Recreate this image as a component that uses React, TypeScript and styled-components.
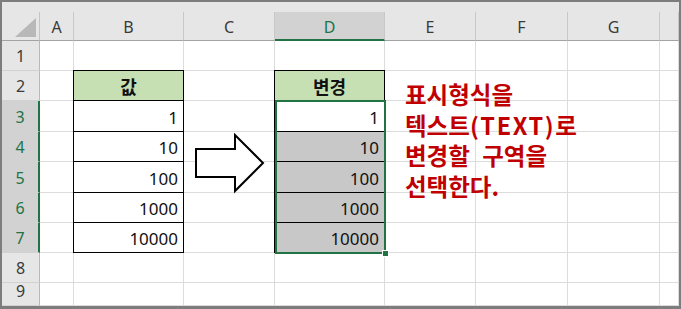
import React from "react";
import styled, { createGlobalStyle, css } from "styled-components";

const GlobalStyle = createGlobalStyle`
  html, body { margin: 0; padding: 0; background: #ffffff; }
  body { font-family: "Noto Sans", "Noto Sans CJK KR", sans-serif; }
`;

const GREEN = "#217346";
const COLS = ["A", "B", "C", "D", "E", "F", "G", ""];
const ROW_HEIGHTS = [30, 30, 31, 30, 31, 30, 30, 30, 23];

type CellData = {
  text?: string;
  boxed?: boolean;
  head?: boolean;
  shade?: boolean;
};

const values = ["1", "10", "100", "1000", "10000"];

function cellAt(row: number, col: number): CellData {
  if (row === 2 && col === 1) return { text: "값", boxed: true, head: true };
  if (row === 2 && col === 3) return { text: "변경", boxed: true, head: true };
  if (row >= 3 && row <= 7 && (col === 1 || col === 3)) {
    return { text: values[row - 3], boxed: true, shade: col === 3 && row >= 4 };
  }
  return {};
}

/* grid line numbers: line 1 = top strip, line 2 = column letters, line 3.. = sheet rows */
const at = (p: { $r: number; $c: number }) => css`
  grid-row: ${p.$r};
  grid-column: ${p.$c};
`;

type Pos = { $r: number; $c: number };

const Sheet = styled.div`
  position: relative;
  width: 681px;
  height: 309px;
  overflow: hidden;
`;

const Grid = styled.div`
  box-sizing: border-box;
  width: 681px;
  height: 309px;
  display: grid;
  grid-template-columns: 38px 34px 110px 91px 110px 91px 92px 92px 19px;
  grid-template-rows: 10px 29px ${ROW_HEIGHTS.map((h) => `${h}px`).join(" ")};
  border: 2px solid #7d7d7d;
  border-bottom-width: 3px;
  background: #ffffff;
`;

const TopStrip = styled.div`
  grid-row: 1;
  grid-column: 1 / -1;
  background: #e6e6e6;
`;

const Corner = styled.div`
  grid-row: 2;
  grid-column: 1;
  box-sizing: border-box;
  background: #e6e6e6;
  border-right: 1px solid #c4c4c4;
  border-bottom: 1px solid #a3a3a3;
  display: flex;
  align-items: flex-end;
  justify-content: flex-end;
  padding: 0 3px 3px 0;
`;

const Triangle = styled.div`
  width: 0;
  height: 0;
  border-left: 21px solid transparent;
  border-bottom: 19px solid #b8b8b8;
`;

const ColHeader = styled.div<Pos & { $active?: boolean }>`
  ${at}
  box-sizing: border-box;
  display: flex;
  align-items: center;
  justify-content: center;
  background: #e6e6e6;
  border-right: 1px solid #c8c8c8;
  border-bottom: 1px solid #a3a3a3;
  font-size: 16px;
  color: #3a3a3a;
  padding-top: 1px;
  ${(p) =>
    p.$active &&
    css`
      background: #d2d2d2;
      color: ${GREEN};
      border-bottom: 2px solid ${GREEN};
      padding-top: 2px;
    `}
`;

const RowHeader = styled.div<Pos & { $active?: boolean }>`
  ${at}
  box-sizing: border-box;
  display: flex;
  align-items: flex-end;
  justify-content: center;
  padding-bottom: 2px;
  background: #e6e6e6;
  border-right: 1px solid #b9b9b9;
  border-bottom: 1px solid #d2d2d2;
  font-size: 16px;
  line-height: 24px;
  color: #3a3a3a;
  ${(p) =>
    p.$active &&
    css`
      background: #d2d2d2;
      color: ${GREEN};
      border-right: 2px solid ${GREEN};
    `}
`;

const Cell = styled.div<Pos & { $boxed?: boolean; $head?: boolean; $shade?: boolean }>`
  ${at}
  box-sizing: border-box;
  display: flex;
  align-items: flex-end;
  justify-content: flex-end;
  padding: 0 5px 1px 0;
  border-right: 1px solid #dcdcdc;
  border-bottom: 1px solid #dcdcdc;
  font-size: 17px;
  line-height: 24px;
  color: #111111;
  background: ${(p) => (p.$shade ? "#c8c8c8" : "#ffffff")};
  ${(p) =>
    p.$boxed &&
    css`
      margin: -1px 0 0 -1px;
      border: 1px solid #000000;
    `}
  ${(p) =>
    p.$head &&
    css`
      background: #c6e0b4;
      justify-content: center;
      align-items: center;
      padding: 0;
      font-family: "Noto Sans CJK KR", sans-serif;
      font-weight: 700;
      font-size: 18px;
    `}
`;

const Selection = styled.div`
  position: relative;
  grid-column: 5;
  grid-row: 5 / 10;
  margin: -1px -1px -1px 0;
  border: 2px solid ${GREEN};
  pointer-events: none;
  z-index: 2;
`;

const FillHandle = styled.div`
  position: absolute;
  right: -5px;
  bottom: -5px;
  width: 5px;
  height: 5px;
  background: ${GREEN};
  border: 1px solid #ffffff;
`;

const ArrowShape = styled.svg`
  position: absolute;
  left: 194px;
  top: 133px;
  z-index: 3;
`;

const Note = styled.div`
  position: absolute;
  left: 405px;
  top: 79px;
  z-index: 3;
  font-family: "Noto Sans CJK KR", sans-serif;
  font-weight: 700;
  font-size: 23.5px;
  line-height: 30.5px;
  color: #c00000;
  word-spacing: 7px;
  white-space: nowrap;
`;

const Latin = styled.span`
  letter-spacing: 1.6px;
`;

export default function App() {
  const rows = ROW_HEIGHTS.map((_, i) => i + 1);
  return (
    <Sheet>
      <GlobalStyle />
      <Grid>
        <TopStrip />
        <Corner>
          <Triangle />
        </Corner>
        {COLS.map((c, i) => (
          <ColHeader key={`h${i}`} $r={2} $c={i + 2} $active={c === "D"}>
            {c}
          </ColHeader>
        ))}
        {rows.map((r) => (
          <React.Fragment key={`r${r}`}>
            <RowHeader $r={r + 2} $c={1} $active={r >= 3 && r <= 7}>
              {r}
            </RowHeader>
            {COLS.map((_, c) => {
              const d = cellAt(r, c);
              return (
                <Cell
                  key={`c${r}-${c}`}
                  $r={r + 2}
                  $c={c + 2}
                  $boxed={d.boxed}
                  $head={d.head}
                  $shade={d.shade}
                >
                  {d.text}
                </Cell>
              );
            })}
          </React.Fragment>
        ))}
        <Selection>
          <FillHandle />
        </Selection>
      </Grid>
      <ArrowShape width="72" height="62" viewBox="0 0 72 62">
        <polygon
          points="2,16 41,16 41,2 69,30 41,58 41,44 2,44"
          fill="#ffffff"
          stroke="#000000"
          strokeWidth="2"
          strokeLinejoin="miter"
        />
      </ArrowShape>
      <Note>
        표시형식을
        <br />
        텍스트<Latin>(TEXT)</Latin>로
        <br />
        변경할 구역을
        <br />
        선택한다.
      </Note>
    </Sheet>
  );
}
